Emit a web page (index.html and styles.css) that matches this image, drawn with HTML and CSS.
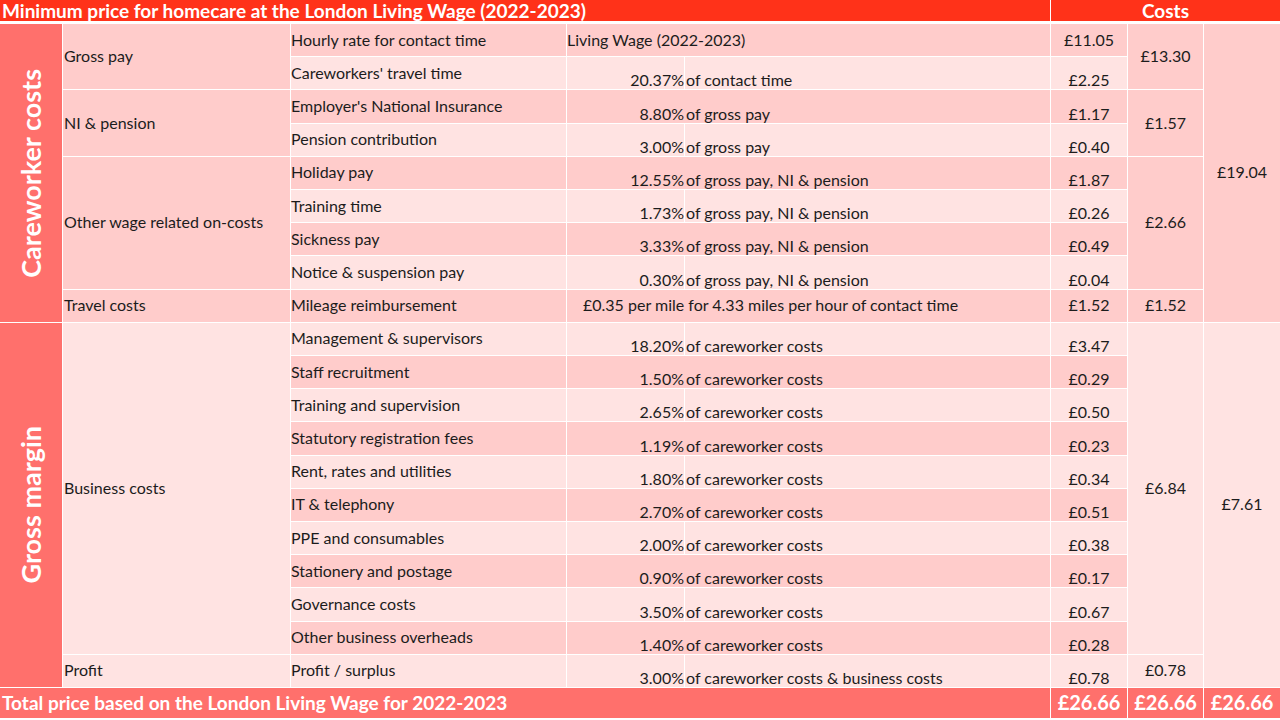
FILE: index.html
```html
<!DOCTYPE html>
<html lang="en">
<head>
<meta charset="utf-8">
<title>Minimum price for homecare at the London Living Wage (2022-2023)</title>
<link rel="stylesheet" href="styles.css">
</head>
<body>
<div class="page">
  <div class="head">
    <div class="head-title">Minimum price for homecare at the London Living Wage (2022-2023)</div>
    <div class="head-costs">Costs</div>
  </div>
  <div class="sheet">
    <!-- row 1 -->
    <div class="c sect span9"><span class="vlabel">Careworker costs</span></div>
    <div class="c grp dark span2">Gross pay</div>
    <div class="c item dark">Hourly rate for contact time</div>
    <div class="c de dark mid"><span class="full">Living Wage (2022-2023)</span></div>
    <div class="c cost dark mid">£11.05</div>
    <div class="c sub dark span2">£13.30</div>
    <div class="c sub dark span9">£19.04</div>
    <!-- row 2 -->
    <div class="c item light">Careworkers' travel time</div>
    <div class="c de light"><span class="pct">20.37%</span><span class="desc">of contact time</span></div>
    <div class="c cost light">£2.25</div>
    <!-- row 3 -->
    <div class="c grp dark span2">NI &amp; pension</div>
    <div class="c item dark">Employer's National Insurance</div>
    <div class="c de dark"><span class="pct">8.80%</span><span class="desc">of gross pay</span></div>
    <div class="c cost dark">£1.17</div>
    <div class="c sub dark span2">£1.57</div>
    <!-- row 4 -->
    <div class="c item light">Pension contribution</div>
    <div class="c de light"><span class="pct">3.00%</span><span class="desc">of gross pay</span></div>
    <div class="c cost light">£0.40</div>
    <!-- row 5 -->
    <div class="c grp dark span4">Other wage related on-costs</div>
    <div class="c item dark">Holiday pay</div>
    <div class="c de dark"><span class="pct">12.55%</span><span class="desc">of gross pay, NI &amp; pension</span></div>
    <div class="c cost dark">£1.87</div>
    <div class="c sub dark span4">£2.66</div>
    <!-- row 6 -->
    <div class="c item light">Training time</div>
    <div class="c de light"><span class="pct">1.73%</span><span class="desc">of gross pay, NI &amp; pension</span></div>
    <div class="c cost light">£0.26</div>
    <!-- row 7 -->
    <div class="c item dark">Sickness pay</div>
    <div class="c de dark"><span class="pct">3.33%</span><span class="desc">of gross pay, NI &amp; pension</span></div>
    <div class="c cost dark">£0.49</div>
    <!-- row 8 -->
    <div class="c item light">Notice &amp; suspension pay</div>
    <div class="c de light"><span class="pct">0.30%</span><span class="desc">of gross pay, NI &amp; pension</span></div>
    <div class="c cost light">£0.04</div>
    <!-- row 9 -->
    <div class="c grp dark">Travel costs</div>
    <div class="c item dark">Mileage reimbursement</div>
    <div class="c de dark mid"><span class="full indent">£0.35 per mile for 4.33 miles per hour of contact time</span></div>
    <div class="c cost dark mid">£1.52</div>
    <div class="c sub dark">£1.52</div>
    <!-- row 10 -->
    <div class="c sect span11"><span class="vlabel">Gross margin</span></div>
    <div class="c grp light span10">Business costs</div>
    <div class="c item light">Management &amp; supervisors</div>
    <div class="c de light"><span class="pct">18.20%</span><span class="desc">of careworker costs</span></div>
    <div class="c cost light">£3.47</div>
    <div class="c sub light span10">£6.84</div>
    <div class="c sub light span11">£7.61</div>
    <!-- row 11 -->
    <div class="c item dark">Staff recruitment</div>
    <div class="c de dark"><span class="pct">1.50%</span><span class="desc">of careworker costs</span></div>
    <div class="c cost dark">£0.29</div>
    <!-- row 12 -->
    <div class="c item light">Training and supervision</div>
    <div class="c de light"><span class="pct">2.65%</span><span class="desc">of careworker costs</span></div>
    <div class="c cost light">£0.50</div>
    <!-- row 13 -->
    <div class="c item dark">Statutory registration fees</div>
    <div class="c de dark"><span class="pct">1.19%</span><span class="desc">of careworker costs</span></div>
    <div class="c cost dark">£0.23</div>
    <!-- row 14 -->
    <div class="c item light">Rent, rates and utilities</div>
    <div class="c de light"><span class="pct">1.80%</span><span class="desc">of careworker costs</span></div>
    <div class="c cost light">£0.34</div>
    <!-- row 15 -->
    <div class="c item dark">IT &amp; telephony</div>
    <div class="c de dark"><span class="pct">2.70%</span><span class="desc">of careworker costs</span></div>
    <div class="c cost dark">£0.51</div>
    <!-- row 16 -->
    <div class="c item light">PPE and consumables</div>
    <div class="c de light"><span class="pct">2.00%</span><span class="desc">of careworker costs</span></div>
    <div class="c cost light">£0.38</div>
    <!-- row 17 -->
    <div class="c item dark">Stationery and postage</div>
    <div class="c de dark"><span class="pct">0.90%</span><span class="desc">of careworker costs</span></div>
    <div class="c cost dark">£0.17</div>
    <!-- row 18 -->
    <div class="c item light">Governance costs</div>
    <div class="c de light"><span class="pct">3.50%</span><span class="desc">of careworker costs</span></div>
    <div class="c cost light">£0.67</div>
    <!-- row 19 -->
    <div class="c item dark">Other business overheads</div>
    <div class="c de dark"><span class="pct">1.40%</span><span class="desc">of careworker costs</span></div>
    <div class="c cost dark">£0.28</div>
    <!-- row 20 -->
    <div class="c grp light">Profit</div>
    <div class="c item light">Profit / surplus</div>
    <div class="c de light"><span class="pct">3.00%</span><span class="desc">of careworker costs &amp; business costs</span></div>
    <div class="c cost light">£0.78</div>
    <div class="c sub light">£0.78</div>
    <!-- total -->
    <div class="c total-title">Total price based on the London Living Wage for 2022-2023</div>
    <div class="c total-cost">£26.66</div>
    <div class="c total-cost">£26.66</div>
    <div class="c total-cost">£26.66</div>
  </div>
</div>
</body>
</html>
```

FILE: styles.css
```css
html, body {
  margin: 0;
  padding: 0;
  background: #ffffff;
}

body {
  font-family: "Lato", "Liberation Sans", sans-serif;
  color: #1c1c1c;
  font-size: 16px;
}

.page {
  width: 1280px;
  height: 720px;
  overflow: hidden;
}

.head {
  display: grid;
  grid-template-columns: 1050px 229px;
  column-gap: 1px;
  height: 21px;
  margin-bottom: 3px;
}

.head-title,
.head-costs {
  background: #ff3219;
  color: #ffffff;
  font-weight: 700;
  font-size: 19px;
  line-height: 19px;
  display: flex;
  align-items: center;
  padding-bottom: 1px;
  box-sizing: border-box;
}

.head-title {
  padding-left: 2px;
}

.head-costs {
  justify-content: center;
}

.sheet {
  display: grid;
  grid-template-columns: 62px 227px 275px 483px 76px 75px 76px;
  grid-template-rows: repeat(20, 1fr) 30px;
  gap: 1px;
  height: 694px;
}

.c {
  display: flex;
  align-items: center;
  min-width: 0;
  line-height: 17px;
  white-space: nowrap;
  padding-bottom: 2px;
  box-sizing: border-box;
}

.dark {
  background: #ffcccb;
}

.light {
  background: #ffe3e2;
}

.span2 { grid-row: span 2; }
.span4 { grid-row: span 4; }
.span9 { grid-row: span 9; }
.span10 { grid-row: span 10; }
.span11 { grid-row: span 11; }

.sect {
  background: #ff706c;
  justify-content: center;
  padding-bottom: 0;
}

.vlabel {
  writing-mode: vertical-rl;
  transform: rotate(180deg);
  color: #ffffff;
  font-weight: 700;
  font-size: 27px;
  line-height: 28px;
}

.grp {
  padding-left: 1px;
}

.item {
  padding-left: 0;
}

.de {
  align-items: stretch;
  padding-bottom: 0;
}

.de.mid {
  align-items: center;
  padding-bottom: 2px;
}

.full {
  padding-left: 0;
}

.indent {
  padding-left: 16px;
}

.pct {
  width: 117px;
  flex: none;
  display: flex;
  align-items: flex-end;
  justify-content: flex-end;
  box-sizing: border-box;
  padding-bottom: 1px;
}

.light .pct {
  border-right: 1px solid #ffffff;
  width: 118px;
}

.desc {
  display: flex;
  align-items: flex-end;
  padding-left: 1px;
  padding-bottom: 1px;
}

.dark .desc {
  padding-left: 2px;
}

.cost {
  justify-content: center;
  align-items: flex-end;
  padding-bottom: 1px;
}

.cost.mid {
  align-items: center;
  padding-bottom: 2px;
}

.sub {
  justify-content: center;
}

.total-title,
.total-cost {
  background: #ff706c;
  color: #ffffff;
  font-weight: 700;
  font-size: 19px;
  padding-bottom: 1px;
}

.total-title {
  grid-column: 1 / 5;
  padding-left: 2px;
}

.total-cost {
  justify-content: center;
  font-size: 20px;
}
```
